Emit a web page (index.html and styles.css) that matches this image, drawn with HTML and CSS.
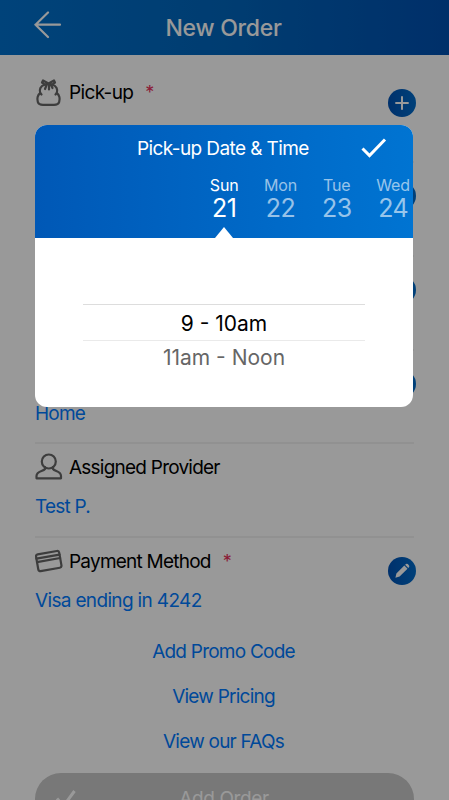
FILE: index.html
```
<!DOCTYPE html>
<html lang="en">
<head>
  <meta charset="utf-8">
  <title>New Order</title>
  <link rel="stylesheet" href="styles.css">
</head>
<body>

<div class="page">

  <header class="page-header">
    <svg class="back" viewBox="0 0 28 28">
      <path d="M14 1.5 L1.5 13.7 L14 26 M1.5 13.7 H26"/>
    </svg>
    <h1>New Order</h1>
  </header>

  <main class="order">
    <section class="field">
      <div class="field-label">
        <svg class="icon" viewBox="0 0 28 28">
          <path d="M9.500 5.800 C5.500 7 4 10.500 5.200 14 C2.500 16 1.800 20 2.800 22.800 C3.500 25 5.500 25.800 8 25.800 H19 C21.500 25.800 23.500 25 24.200 22.800 C25.200 20 24.500 16 21.800 14 C23 10.500 21.500 7 17.500 5.800"/>
          <path d="M13.500 4.500 L8 1.500 L7 3.500 L9.500 5.300 Z M13.500 4.500 L19 1.500 L20 3.500 L17.500 5.300 Z M12 5 L10 10 M14 5 V10.500 M15.500 5 L17.500 9"/>
          <path d="M5.200 14 L6.500 15.500 M21.800 14 L20.500 15.500"/>
        </svg>
        <span class="label-pickup">Pick-up</span>
        <span class="required">*</span>
      </div>
      <span class="round-button">
        <svg viewBox="0 0 28 28"><path d="M14 7.300 V20.700 M7.300 14 H20.700"/></svg>
      </span>
    </section>

    <section class="field">
      <span class="round-button"></span>
    </section>

    <section class="field">
      <span class="round-button"></span>
    </section>

    <section class="field">
      <span class="round-button"></span>
      <div class="field-value">Home</div>
    </section>

    <section class="field">
      <div class="field-label">
        <svg class="icon" viewBox="0 0 28 28">
          <circle cx="13.800" cy="8.500" r="7"/>
          <path d="M10 14 V16 C8 18.500 1.500 18 1.500 23 V25.300 H26 V23 C26 18 20 18.500 18 16 V14"/>
        </svg>
        <span>Assigned Provider</span>
      </div>
      <div class="field-value">Test P.</div>
    </section>

    <section class="field">
      <div class="field-label">
        <svg class="icon" viewBox="0 0 28 28">
          <g transform="rotate(-10 14 14)">
            <rect x="2" y="5.500" width="23.500" height="17" rx="2"/>
            <path d="M2 9.500 H25.500 M2 13 H25.500"/>
          </g>
        </svg>
        <span>Payment Method</span>
        <span class="required">*</span>
      </div>
      <span class="round-button">
        <svg viewBox="0 0 28 28">
          <path class="solid" d="M16.300 8.500 L19.500 11.700 L11.600 19.600 L7.400 20.700 L8.400 16.400 Z M17.100 7.700 L18 6.900 Q18.900 6.300 19.800 7.100 L20.900 8.200 Q21.700 9.100 21.100 10 L20.300 10.900 Z"/>
        </svg>
      </span>
      <div class="field-value value-card">Visa ending in 4242</div>
    </section>

    <nav class="links">
      <a>Add Promo Code</a>
      <a>View Pricing</a>
      <a>View our FAQs</a>
    </nav>

    <div class="submit">
      <svg class="submit-check" viewBox="0 0 24 20"><path d="M2 9.500 L8.500 17 L19.500 2"/></svg>
      <span>Add Order</span>
    </div>
  </main>

</div>

<div class="overlay">
  <div class="picker">
    <div class="picker-head">
      <div class="picker-title">
        <span>Pick-up Date &amp; Time</span>
        <svg class="confirm" viewBox="0 0 26 20"><path d="M1.500 10.500 L8.500 17.500 L24 1.500"/></svg>
      </div>
      <div class="days">
        <div class="day selected"><span>Sun</span><b>21</b></div>
        <div class="day"><span>Mon</span><b>22</b></div>
        <div class="day"><span>Tue</span><b>23</b></div>
        <div class="day"><span>Wed</span><b>24</b></div>
      </div>
    </div>
    <div class="times">
      <div class="time current">9 - 10am</div>
      <div class="time next">11am - Noon</div>
    </div>
  </div>
</div>

</body>
</html>
```

FILE: styles.css
```
* {
  box-sizing: border-box;
  margin: 0;
  padding: 0;
}

body {
  height: 800px;
  overflow: hidden;
  font-family: Inter, "Liberation Sans", sans-serif;
  font-size: 19px;
  letter-spacing: -0.77px;
  color: #000;
  background: #fff;
}

svg {
  display: block;
  fill: none;
  stroke: currentColor;
}

.page {
  height: 800px;
  overflow: hidden;
}

.page-header {
  display: flex;
  align-items: center;
  height: 55px;
  padding: 0 34px;
  color: #fff;
  background: linear-gradient(90deg, #0070cc, #0066bd 50%, #0050b0);
}

.page-header h1 {
  flex: 1;
  margin-right: 30px;
  text-align: center;
  font-size: 23px;
  font-weight: 500;
  letter-spacing: -0.25px;
}

.back {
  width: 28px;
  height: 28px;
  margin-top: -5px;
  stroke-width: 2.2;
  stroke-linecap: round;
}

.order {
  padding: 14px 35px 0;
}

.field {
  display: grid;
  grid-template-columns: 1fr 28px;
  grid-template-rows: 47px 45px;
  height: 92px;
}

.field + .field {
  height: 93.8px;
  grid-template-rows: 46px 45px;
  border-top: 2px solid #f2f2f2;
}

.field-label {
  grid-area: 1 / 1;
  display: flex;
  align-items: center;
}

.icon {
  width: 28px;
  height: 28px;
  margin-right: 6px;
  color: #666;
  stroke-width: 2.2;
  stroke-linejoin: round;
  stroke-linecap: round;
}

.label-pickup {
  letter-spacing: -0.65px;
}

.required {
  margin-left: 12px;
  color: #e8305a;
  font-size: 18px;
}

.round-button {
  grid-area: 1 / 2;
  width: 28px;
  height: 28px;
  margin: 20px 0 0 2px;
  border-radius: 50%;
  color: #fff;
  background: linear-gradient(90deg, #0052b4, #006ccb);
}

.field + .field .round-button {
  margin-top: 19px;
}

.round-button svg {
  stroke-width: 2;
}

.round-button .solid {
  fill: currentColor;
  stroke: none;
}

.field-value {
  grid-area: 2 / 1;
  padding-top: 5px;
  color: #007aff;
}

.value-card {
  letter-spacing: -0.66px;
}

.links {
  display: flex;
  flex-direction: column;
  align-items: center;
  gap: 22px;
  padding: 10px 2px 0 0;
  color: #007aff;
}

.submit {
  display: flex;
  align-items: center;
  height: 52px;
  margin-top: 20px;
  padding: 0 20px;
  border-radius: 26px;
  color: #fff;
  background: #c8c8c8;
}

.submit-check {
  width: 24px;
  height: 20px;
  stroke-width: 3;
}

.submit span {
  flex: 1;
  margin-right: 25px;
  text-align: center;
  letter-spacing: -0.4px;
}

/* Modal */
.overlay {
  position: absolute;
  inset: 0;
  padding: 125px 36px 0 35px;
  background: rgba(0, 0, 0, 0.4);
}

.picker {
  height: 282px;
  overflow: hidden;
  border-radius: 12px;
  background: #fff;
}

.picker-head {
  height: 113px;
  color: #fff;
  background: linear-gradient(90deg, #0058b6, #0074d2);
}

.picker-title {
  display: flex;
  align-items: center;
  height: 46px;
  padding-left: 102px;
  letter-spacing: -0.6px;
}

.confirm {
  width: 26px;
  height: 20px;
  margin-left: 52px;
  stroke-width: 3;
}

.days {
  display: flex;
  height: 67px;
  padding-left: 161px;
}

.day {
  display: flex;
  flex: 0 0 56.3px;
  flex-direction: column;
  align-items: center;
  padding-top: 4px;
  color: rgba(255, 255, 255, 0.6);
  font-size: 16px;
  line-height: 20px;
  letter-spacing: -0.2px;
}

.day b {
  font-size: 25px;
  font-weight: 400;
  line-height: 26px;
  letter-spacing: -0.6px;
}

.day.selected {
  color: #fff;
}

/* Pointer under the selected day */
.day.selected::after {
  content: "";
  margin-top: auto;
  border: 9px solid transparent;
  border-top: 0;
  border-bottom: 11px solid #fff;
}

.times {
  padding: 66px 48px 0;
  letter-spacing: 0;
}

.time {
  height: 37px;
  text-align: center;
  font-size: 21px;
  line-height: 38px;
}

.time.current {
  border-top: 1px solid #ddd;
  border-bottom: 1px solid #eaeaea;
}

.time.next {
  color: #666;
  line-height: 33px;
}
```
